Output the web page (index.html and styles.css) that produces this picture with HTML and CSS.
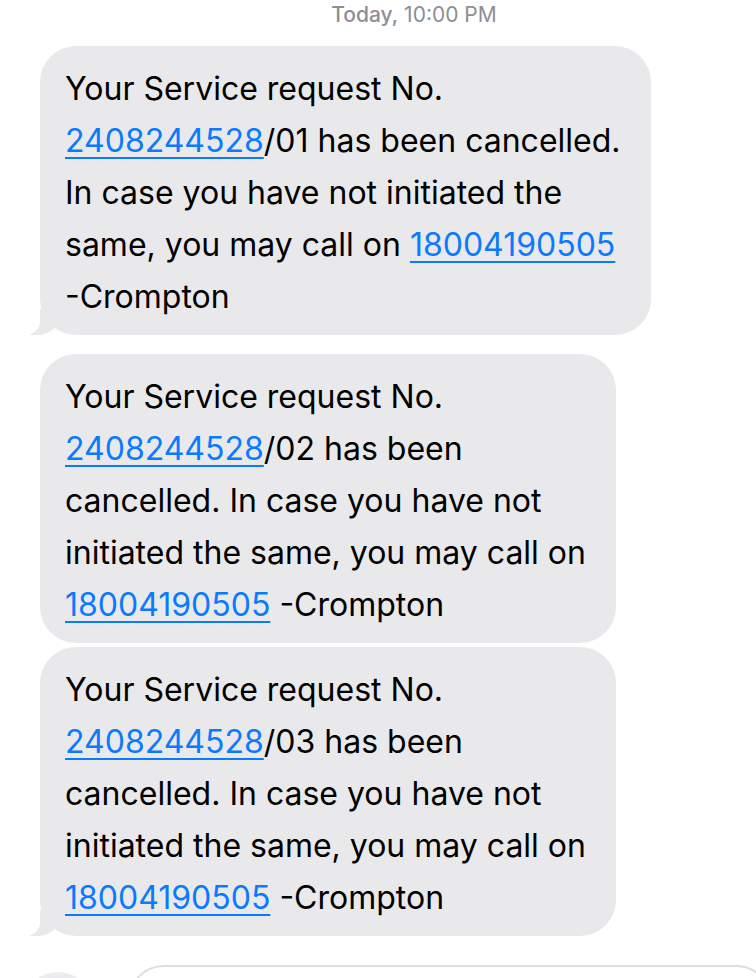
FILE: index.html
```html
<!DOCTYPE html>
<html>
<head>
<meta charset="utf-8">
<link rel="stylesheet" href="styles.css">
</head>
<body>
<div class="screen">
  <div class="stamp"><span class="day">Today,</span> 10:00 PM</div>
  <div class="thread">
    <div class="bubble tail gap-big">Your Service request No.<br><a href="#">2408244528</a>/01 has been cancelled.<br>In case you have not initiated the<br>same, you may call on <a href="#">18004190505</a><br>-Crompton</div>
    <div class="bubble gap-small">Your Service request No.<br><a href="#">2408244528</a>/02 has been<br>cancelled. In case you have not<br>initiated the same, you may call on<br><a href="#">18004190505</a> -Crompton</div>
    <div class="bubble tail">Your Service request No.<br><a href="#">2408244528</a>/03 has been<br>cancelled. In case you have not<br>initiated the same, you may call on<br><a href="#">18004190505</a> -Crompton</div>
  </div>
  <div class="composer">
    <div class="apps"></div>
    <div class="field"></div>
  </div>
</div>
</body>
</html>
```
FILE: styles.css
```css
html, body {
  margin: 0;
  padding: 0;
  background: #fff;
}
.screen {
  width: 756px;
  height: 978px;
  overflow: hidden;
  font-family: Inter, "Liberation Sans", sans-serif;
}
.stamp {
  padding: 2px 0 0 72px;
  height: 46px;
  box-sizing: border-box;
  text-align: center;
  font-size: 21px;
  line-height: 26px;
  color: #8e8e93;
}
.stamp .day {
  font-weight: 500;
}
.thread {
  display: flex;
  flex-direction: column;
  align-items: flex-start;
  padding-left: 40px;
}
.bubble {
  position: relative;
  width: fit-content;
  background: #e9e9eb;
  color: #000;
  border-radius: 36px;
  padding: 17px 30px 12px 25px;
  font-size: 32px;
  line-height: 52px;
  white-space: nowrap;
}
.gap-big { margin-bottom: 19px; }
.gap-small { margin-bottom: 4px; }
.bubble a {
  color: #0a7aff;
  text-decoration: underline;
  text-decoration-thickness: 2px;
  text-underline-offset: 5px;
}
.bubble.tail::before {
  content: "";
  position: absolute;
  bottom: 0;
  left: -11px;
  width: 30px;
  height: 26px;
  background: #e9e9eb;
  border-bottom-right-radius: 22px 18px;
}
.bubble.tail::after {
  content: "";
  position: absolute;
  bottom: 0;
  left: -30px;
  width: 30px;
  height: 26px;
  background: #fff;
  border-bottom-right-radius: 14px;
}
.composer {
  display: flex;
  align-items: flex-start;
  margin-top: 29px;
}
.apps {
  width: 72px;
  height: 72px;
  margin: 7px 0 0 22px;
  border-radius: 50%;
  background: #ececee;
  flex: none;
}
.field {
  margin-left: 34px;
  width: 640px;
  height: 70px;
  border: 2px solid #dedee0;
  border-radius: 36px;
  flex: none;
}
```
